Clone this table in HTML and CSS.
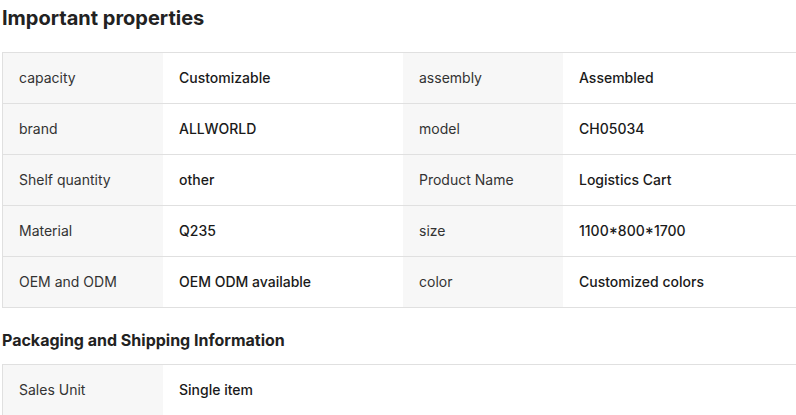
FILE: index.html
```html
<!DOCTYPE html>
<html>
<head>
<meta charset="utf-8">
<link rel="stylesheet" href="styles.css">
</head>
<body>
<div class="page">
  <h2 class="title">Important properties</h2>
  <div class="props">
    <div class="row">
      <div class="k">capacity</div><div class="v">Customizable</div>
      <div class="k">assembly</div><div class="v">Assembled</div>
    </div>
    <div class="row">
      <div class="k">brand</div><div class="v">ALLWORLD</div>
      <div class="k">model</div><div class="v">CH05034</div>
    </div>
    <div class="row">
      <div class="k">Shelf quantity</div><div class="v">other</div>
      <div class="k">Product Name</div><div class="v">Logistics Cart</div>
    </div>
    <div class="row">
      <div class="k">Material</div><div class="v">Q235</div>
      <div class="k">size</div><div class="v">1100*800*1700</div>
    </div>
    <div class="row">
      <div class="k">OEM and ODM</div><div class="v">OEM ODM available</div>
      <div class="k">color</div><div class="v">Customized colors</div>
    </div>
  </div>
  <h3 class="subtitle">Packaging and Shipping Information</h3>
  <div class="props">
    <div class="row">
      <div class="k">Sales Unit</div><div class="v">Single item</div>
      <div class="k empty"></div><div class="v"></div>
    </div>
  </div>
</div>
</body>
</html>
```
FILE: styles.css
```css
html, body {
  margin: 0;
  padding: 0;
  background: #fff;
}
body {
  font-family: Inter, "Noto Sans", sans-serif;
  color: #222;
  overflow: hidden;
}
.page {
  padding-left: 2px;
  width: 801px;
}
.title {
  font-size: 20px;
  font-weight: 700;
  line-height: 28px;
  margin: 4px 0 20px 0;
  color: #222;
}
.subtitle {
  font-size: 16px;
  font-weight: 700;
  line-height: 22px;
  margin: 21px 0 13px 0;
  color: #222;
}
.props {
  border-top: 1px solid #e0e0e0;
  border-left: 1px solid #e0e0e0;
}
.row {
  display: grid;
  grid-template-columns: 160px 240px 160px 240px;
  border-bottom: 1px solid #e0e0e0;
}
.k, .v {
  height: 50px;
  box-sizing: border-box;
  padding-bottom: 2px;
  display: flex;
  align-items: center;
  padding-left: 16px;
  font-size: 14px;
}
.k {
  background: #f7f7f7;
  color: #333;
  font-weight: 400;
}
.v {
  background: #fff;
  color: #1a1a1a;
  font-weight: 450;
}
.k.empty {
  background: #fff;
}
```
